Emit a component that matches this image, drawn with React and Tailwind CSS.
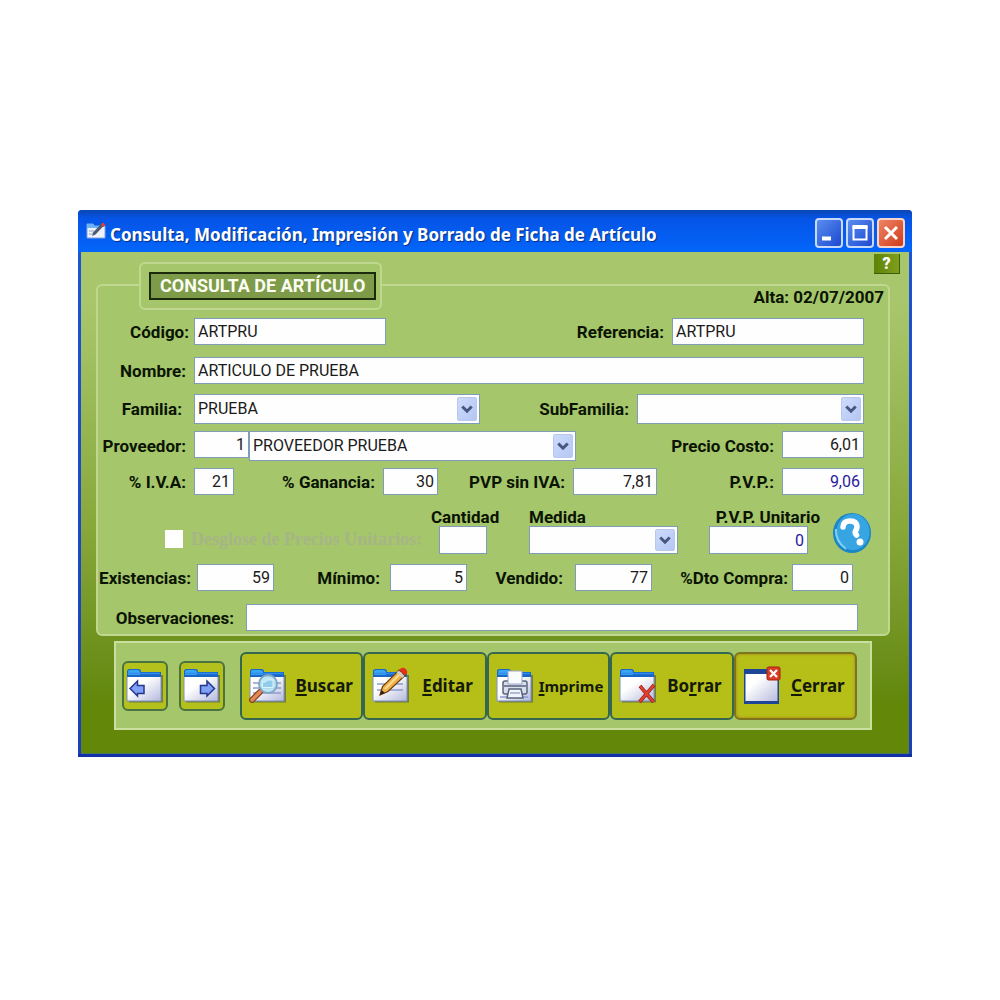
import React from 'react';
import clsx from 'clsx';

const Label = ({ htmlFor, className, children }) => (
    <label
        htmlFor={htmlFor}
        className={clsx('shrink-0 whitespace-nowrap text-right font-bold text-[17px] leading-[18px] text-[#0b1403]', className)}
    >
        {children}
    </label>
);

const Field = ({ id, value = '', className }) => (
    <input
        id={id}
        type="text"
        defaultValue={value}
        className={clsx('min-w-0 border border-[#7f9db9] bg-[#fefefe] px-[3px] text-[16px] leading-[20px] outline-none', className)}
    />
);

const Combo = ({ id, value = '', label, className }) => (
    <div className={clsx('relative min-w-0', className)}>
        <select
            id={id}
            aria-label={label}
            defaultValue={value}
            className="block h-full w-full appearance-none border border-[#7f9db9] bg-[#fefefe] pl-[3px] pr-6 text-[16px] leading-[20px] text-[#1a1a1a] outline-none"
        >
            <option value={value}>{value}</option>
        </select>
        <span className="pointer-events-none absolute inset-y-[3px] right-[3px] flex w-5 items-center justify-center rounded-xs border border-[#b9c8ee] bg-linear-to-br from-[#cddafb] to-[#b4c7f3]">
            <svg width="12" height="9" viewBox="0 0 12 9" fill="none" stroke="#46567f" strokeWidth="3">
                <path d="M1.3 1.5 6 6.2l4.700-4.700" />
            </svg>
        </span>
    </div>
);

const FolderBase = ({ id, children }) => (
    <svg width="38" height="38" viewBox="0 0 38 38" className="shrink-0">
        <defs>
            <linearGradient id={id} x1="0" y1="0" x2="1" y2="1">
                <stop offset="0.35" stopColor="#ffffff" />
                <stop offset="1" stopColor="#b4b9dc" />
            </linearGradient>
        </defs>
        <path d="M3 34.500h33V8" fill="none" stroke="#55604a" strokeWidth="2" opacity="0.7" />
        <path d="M1 4.500Q1 2 3.500 2h9Q15 2 15 5h20v6H1z" fill="#1766c8" />
        <path d="M2 4.500Q2 3 4 3h8q2 0 2 2.500V8H2z" fill="#3ba6f4" />
        <path d="M2 6.500h32" stroke="#2f8ce8" strokeWidth="1.500" />
        <rect x="1" y="10" width="34" height="24" fill={`url(#${id})`} />
        <path d="M1 10v24h34V10" fill="none" stroke="#7d90c4" strokeWidth="1" />
        {children}
    </svg>
);

const PrevIcon = () => (
    <FolderBase id="g-prev">
        <path d="M4 21.500 11.500 14v4.500H18v8h-6.500V29z" fill="#7fa0f4" stroke="#23378f" strokeWidth="1.500" />
    </FolderBase>
);

const NextIcon = () => (
    <FolderBase id="g-next">
        <path d="M31.500 21.500 24 14v4.500h-6.500v8H24V29z" fill="#7fa0f4" stroke="#23378f" strokeWidth="1.500" />
    </FolderBase>
);

const SearchIcon = () => (
    <FolderBase id="g-search">
        <path d="M4 16h28M4 21h28M4 26h28" stroke="#8c9ccb" strokeWidth="1.500" />
        <path d="M11 25 3 33" stroke="#8c3d1c" strokeWidth="6" strokeLinecap="round" />
        <path d="M11 25 3 33" stroke="#e08a55" strokeWidth="3.500" strokeLinecap="round" />
        <circle cx="19" cy="17" r="9" fill="#b5e2f2" fillOpacity="0.85" stroke="#7fa6c4" strokeWidth="2" />
        <path d="M13.500 15h3l1.500-2h6v7.500H13.500z" fill="#8fcdea" stroke="#d8f3fb" strokeWidth="1" />
    </FolderBase>
);

const EditIcon = () => (
    <FolderBase id="g-edit">
        <path d="M5 17h26M5 23h26" stroke="#8c9ccb" strokeWidth="1.500" />
        <path d="m8 28 2.500-8.500L27 3l6 5.500L16 24.500z" fill="#eeb04a" stroke="#6b3d12" strokeWidth="1.200" />
        <path d="M13 22 29.500 5.500" stroke="#fbdc8c" strokeWidth="2" />
        <path d="m8 28 1.500-5 3.500 3z" fill="#3a200c" />
        <path d="m25.500 4.500 6 5.500" stroke="#c8cdd4" strokeWidth="2.500" />
        <path d="m27 3 2-1.700q2.500-1.500 5 .9 2.300 2.500.5 4.800L33 8.500z" fill="#e0301e" />
    </FolderBase>
);

const PrintIcon = () => (
    <FolderBase id="g-print">
        <path d="M4 30h28" stroke="#8c9ccb" strokeWidth="1.500" />
        <path d="M7 16q0-2 2-2h20q2 0 2 2v9q0 2-2 2H9q-2 0-2-2z" fill="#d9dfea" stroke="#59657e" strokeWidth="1.500" />
        <path d="M12 4h14v13H12z" fill="#fbfcff" stroke="#9aa7c8" strokeWidth="1" />
        <path d="M8 19h22" stroke="#77829a" strokeWidth="2" />
        <path d="M13 22h12l2 9H11z" fill="#f1f4fa" stroke="#59657e" strokeWidth="1.500" />
        <path d="M14 26h10" stroke="#9aa7c8" strokeWidth="1.500" />
    </FolderBase>
);

const DeleteIcon = () => (
    <FolderBase id="g-delete">
        <path d="m21 19 13.500 16M35 18 20.500 35" stroke="#8e1c12" strokeWidth="3.500" />
        <path d="m21 19 13.500 16M35 18 20.500 35" stroke="#e8402c" strokeWidth="2.200" />
    </FolderBase>
);

const CloseIcon = () => (
    <svg width="38" height="40" viewBox="0 0 38 40" className="shrink-0">
        <defs>
            <linearGradient id="g-close" x1="0" y1="0" x2="1" y2="1">
                <stop offset="0.3" stopColor="#ffffff" />
                <stop offset="1" stopColor="#b9bcdc" />
            </linearGradient>
        </defs>
        <rect x="1" y="3" width="35" height="35" fill="#1d4796" />
        <rect x="2.500" y="8" width="32" height="27" fill="url(#g-close)" />
        <rect x="24" y="1" width="13" height="13" rx="1.500" fill="#dc3c26" stroke="#9e2415" strokeWidth="1" />
        <path d="m27 4 7 7m0-7-7 7" stroke="#fff" strokeWidth="2.200" />
    </svg>
);

const actions = [
    { id: 'buscar', icon: SearchIcon, pre: '', hot: 'B', post: 'uscar' },
    { id: 'editar', icon: EditIcon, pre: '', hot: 'E', post: 'ditar' },
    { id: 'imprime', icon: PrintIcon, pre: '', hot: 'I', post: 'mprime', small: true },
    { id: 'borrar', icon: DeleteIcon, pre: 'Bo', hot: 'r', post: 'rar' },
    { id: 'cerrar', icon: CloseIcon, pre: '', hot: 'C', post: 'errar', active: true },
];

const TitleBar = () => (
    <header className="flex h-[42px] items-center rounded-t-sm bg-linear-to-b from-[#0a46b4] via-[#0554e6] via-20% to-[#0465fb] pl-2 pr-[7px]">
        <svg width="20" height="18" viewBox="0 0 20 18" className="mr-1 shrink-0">
            <path d="M1 2h6l1 2h11v12H1z" fill="#eef2fb" stroke="#7ba6e6" strokeWidth="1" />
            <path d="M1 2h6l1 2h5v2H1z" fill="#6fb2f5" />
            <path d="M3 9h5M3 12h3" stroke="#93a0c8" strokeWidth="1" />
            <path d="m6 14 1-3.500L15 2l2.500 2L9.500 12.500z" fill="#4d5a74" />
            <path d="M15.500 2.500 17 1l2 2-1.500 1.500z" fill="#e0402c" stroke="#e0402c" />
        </svg>
        <h1 className="flex-1 whitespace-nowrap pt-2 font-['Noto_Sans',sans-serif] text-[17px] font-bold leading-6 text-white [text-shadow:1px_1px_1px_#0a2f86]">
            Consulta, Modificación, Impresión y Borrado de Ficha de Artículo
        </h1>
        <div className="mt-1 flex gap-[3px]">
            <button aria-label="Minimizar" className="h-[30px] w-7 rounded-sm border-2 border-[#c9d9fb] bg-linear-to-br from-[#5b8cf0] to-[#1c48d0]">
                <svg width="24" height="26" viewBox="0 0 24 26">
                    <path d="M5 18.500h9" stroke="#fff" strokeWidth="4" />
                </svg>
            </button>
            <button aria-label="Maximizar" className="h-[30px] w-7 rounded-sm border-2 border-[#c9d9fb] bg-linear-to-br from-[#5b8cf0] to-[#1c48d0]">
                <svg width="24" height="26" viewBox="0 0 24 26">
                    <path d="M5.500 6v13.500h13V6" fill="none" stroke="#fff" strokeWidth="2" />
                    <path d="M4.500 7h15" stroke="#fff" strokeWidth="4" />
                </svg>
            </button>
            <button aria-label="Cerrar ventana" className="h-[30px] w-7 rounded-sm border-2 border-[#f6d5cd] bg-linear-to-br from-[#ee8263] to-[#cf3a14]">
                <svg width="24" height="26" viewBox="0 0 24 26">
                    <path d="m6 7 12 12M18 7 6 19" stroke="#fff" strokeWidth="3" />
                </svg>
            </button>
        </div>
    </header>
);

const App = () => (
    <div className="min-h-screen bg-white pl-[78px] pr-[88px] pt-[210px] font-[Roboto,sans-serif] text-[#1a1a1a]">
        <main className="rounded-t-sm bg-linear-to-b from-[#1d55d8] to-[#1a3fc0]">
            <TitleBar />
            <div className="mx-[3px] border-b border-[#4d7a55] bg-linear-to-b from-[#a8c76c] from-10% via-[#88a83a] via-55% to-[#628709] to-90% pb-[23px]">
                <div className="flex h-[10px] justify-end pr-[9px] pt-0.5">
                    <button className="h-5 w-[26px] shrink-0 border-b border-r border-[#3f5a06] bg-linear-to-r from-[#5f8206] to-[#7f9f1c] text-[16px] font-black leading-[18px] text-white">
                        ?
                    </button>
                </div>

                <section className="ml-[15px] mr-[19px] mt-[22px] rounded-md border-2 border-[#bfd78f] bg-[#a5c66b] pb-[3px]">
                    <div className="-mt-6 flex items-end justify-between">
                        <div className="ml-[41px] rounded-md border-2 border-[#bfd78f] bg-[#a5c66b] pb-2 pl-2 pr-1 pt-2">
                            <h2 className="border-2 border-[#1b2a0c] bg-[#7d9b48] px-[9px] text-[18px] font-bold leading-6 text-[#fbfdf2]">
                                CONSULTA DE ARTÍCULO
                            </h2>
                        </div>
                        <p className="mb-1 mr-1 text-[17px] font-bold leading-[18px] text-[#0b1403]">Alta: 02/07/2007</p>
                    </div>

                    <div className="mt-2 flex items-center pr-6">
                        <Label htmlFor="codigo" className="w-24 pr-[5px]">Código:</Label>
                        <Field id="codigo" value="ARTPRU" className="h-[27px] w-48" />
                        <Label htmlFor="referencia" className="flex-1 pr-2">Referencia:</Label>
                        <Field id="referencia" value="ARTPRU" className="h-[27px] w-48" />
                    </div>

                    <div className="mt-3 flex items-center pr-6">
                        <Label htmlFor="nombre" className="w-24 pr-2">Nombre:</Label>
                        <Field id="nombre" value="ARTICULO DE PRUEBA" className="h-[27px] flex-1" />
                    </div>

                    <div className="mt-[10px] flex items-center pr-6">
                        <Label htmlFor="familia" className="w-24 pr-3">Familia:</Label>
                        <Combo id="familia" value="PRUEBA" className="h-[30px] w-[286px]" />
                        <Label htmlFor="subfamilia" className="flex-1 pr-2">SubFamilia:</Label>
                        <Combo id="subfamilia" className="h-[30px] w-[227px]" />
                    </div>

                    <div className="mt-[7px] flex items-start pr-6">
                        <Label htmlFor="proveedor" className="w-24 self-center pr-2">Proveedor:</Label>
                        <Field id="proveedor" value="1" className="h-[27px] w-[55px] text-right" />
                        <Combo id="proveedor-nombre" label="Nombre del proveedor" value="PROVEEDOR PRUEBA" className="h-[30px] w-[327px]" />
                        <Label htmlFor="costo" className="flex-1 self-center pr-2">Precio Costo:</Label>
                        <Field id="costo" value="6,01" className="h-[27px] w-[82px] text-right" />
                    </div>

                    <div className="mt-[7px] flex items-center pr-6">
                        <Label htmlFor="iva" className="w-24 pr-2">% I.V.A:</Label>
                        <Field id="iva" value="21" className="h-[27px] w-10 text-right" />
                        <Label htmlFor="ganancia" className="w-[149px] pr-2">% Ganancia:</Label>
                        <Field id="ganancia" value="30" className="h-[27px] w-[55px] text-right" />
                        <Label htmlFor="pvp-sin-iva" className="w-[135px] pr-2">PVP sin IVA:</Label>
                        <Field id="pvp-sin-iva" value="7,81" className="h-[27px] w-[84px] text-right" />
                        <Label htmlFor="pvp" className="flex-1 pr-2">P.V.P.:</Label>
                        <Field id="pvp" value="9,06" className="h-[27px] w-[82px] text-right text-[#2a1a9a]" />
                    </div>

                    <div className="mt-[13px] flex items-end pr-4">
                        <div className="flex w-[341px] items-center gap-2 pb-1.5 pl-[67px]">
                            <input id="desglose" type="checkbox" disabled className="size-[18px] shrink-0 appearance-none bg-white" />
                            <label htmlFor="desglose" className="whitespace-nowrap font-['Liberation_Serif',serif] text-[18px] font-bold leading-[18px] text-[#a6b586]">
                                Desglose de Precios Unitarios:
                            </label>
                        </div>
                        <div className="flex w-[90px] flex-col items-start">
                            <Label htmlFor="cantidad" className="-ml-2">Cantidad</Label>
                            <Field id="cantidad" className="h-7 w-12" />
                        </div>
                        <div className="flex w-[149px] flex-col">
                            <Label htmlFor="medida" className="self-start">Medida</Label>
                            <Combo id="medida" className="h-7" />
                        </div>
                        <div className="flex flex-1 flex-col items-end">
                            <Label htmlFor="unitario" className="-mr-3">P.V.P. Unitario</Label>
                            <Field id="unitario" value="0" className="h-7 w-[99px] text-right text-[#2a1a9a]" />
                        </div>
                        <button aria-label="Ayuda" className="ml-6 shrink-0">
                            <svg width="40" height="42" viewBox="0 0 40 42">
                                <ellipse cx="20" cy="21" rx="19" ry="20" fill="#1b86c6" />
                                <ellipse cx="21" cy="20" rx="16.500" ry="18" fill="#36a5e2" />
                                <path d="M4 17q-1 12 10 20" fill="none" stroke="#7fd0f4" strokeWidth="2" />
                                <path d="M11 15q0-5.500 6.500-6 7-.3 7.500 5.500 0 2.500-1.500 4.500-1 2 1 4" fill="none" stroke="#fff" strokeWidth="5.500" strokeLinecap="round" />
                                <circle cx="28" cy="30" r="3.500" fill="#fff" />
                            </svg>
                        </button>
                    </div>

                    <div className="mt-[10px] flex items-center pr-[35px]">
                        <Label htmlFor="existencias" className="w-[99px] pr-1.5">Existencias:</Label>
                        <Field id="existencias" value="59" className="h-[27px] w-[77px] text-right" />
                        <Label htmlFor="minimo" className="w-[116px] pr-2.5">Mínimo:</Label>
                        <Field id="minimo" value="5" className="h-[27px] w-[77px] text-right" />
                        <Label htmlFor="vendido" className="w-[108px] pr-3">Vendido:</Label>
                        <Field id="vendido" value="77" className="h-[27px] w-[77px] text-right" />
                        <Label htmlFor="dto" className="flex-1 pr-1">%Dto Compra:</Label>
                        <Field id="dto" value="0" className="h-[27px] w-[61px] text-right" />
                    </div>

                    <div className="mt-[13px] flex items-center pr-[30px]">
                        <Label htmlFor="observaciones" className="w-[148px] pr-3">Observaciones:</Label>
                        <Field id="observaciones" className="h-[27px] flex-1" />
                    </div>
                </section>

                <nav className="ml-[33px] mr-[37px] mt-[5px] flex h-[89px] items-center border-2 border-[#c9de9f] bg-[#a5c66b] pl-1.5 pr-[13px]">
                    <button aria-label="Anterior" className="flex h-[50px] w-[46px] items-center justify-center rounded-md border-2 border-[#4a7340] bg-[#b4c01c]">
                        <PrevIcon />
                    </button>
                    <button aria-label="Siguiente" className="ml-[11px] flex h-[50px] w-[46px] items-center justify-center rounded-md border-2 border-[#4a7340] bg-[#b4c01c]">
                        <NextIcon />
                    </button>
                    <div className="ml-[15px] flex flex-1">
                        {actions.map(({ id, icon: Icon, pre, hot, post, small, active }) => (
                            <button
                                key={id}
                                className={clsx(
                                    'flex h-[68px] flex-1 items-center rounded-md border-2 bg-[#b5bf18] pl-[7px]',
                                    active ? 'border-[#7d7420] shadow-[inset_0_0_3px_#b07a10]' : 'border-[#35674e]'
                                )}
                            >
                                <Icon />
                                <span
                                    className={clsx(
                                        "flex-1 text-center font-['Noto_Sans',sans-serif] font-bold leading-6 text-[#14190a]",
                                        small ? 'text-[15px]' : 'text-[17px]'
                                    )}
                                >
                                    {pre}
                                    <span className="underline decoration-2 underline-offset-2">{hot}</span>
                                    {post}
                                </span>
                            </button>
                        ))}
                    </div>
                </nav>
            </div>
            <div className="h-[3px] bg-[#1230a8]" />
        </main>
    </div>
);

export default App;
